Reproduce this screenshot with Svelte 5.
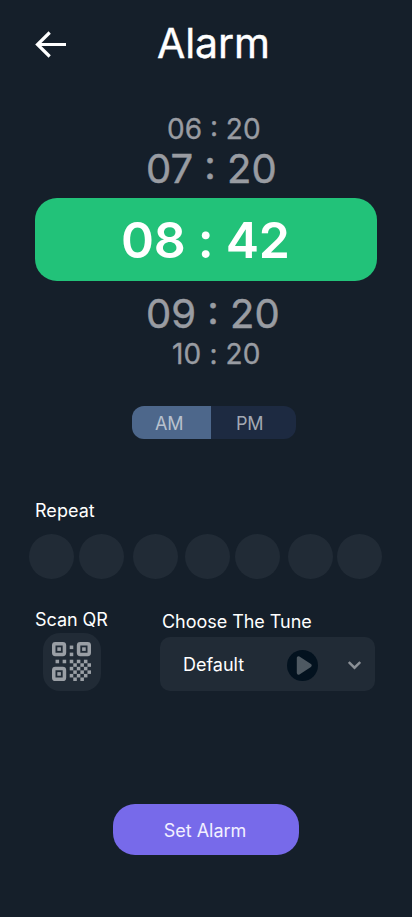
<script>
  const days = [29, 79, 133, 185, 235, 288, 337];
  const gaps = days.map((x, i) => (i ? x - days[i - 1] - 45 : 0));
  const u = 39 / 11;
  const finders = [[0, 0], [7, 0], [0, 7]];
  const cells = [[5, 1], [5, 3], [1, 5], [3, 5]];
  for (let r = 5; r < 11; r++) {
    for (let c = 5; c < 11; c++) {
      if ((r + c) % 2 === 0 && !(r === 10 && c === 10)) cells.push([c, r]);
    }
  }
</script>

<main>
  <header>
    <svg class="back" width="32" height="28" viewBox="0 0 32 28" fill="none" stroke="#fff" stroke-width="3.2">
      <path d="M31 14.500H3M14.700 2.500 2.500 14.500 14.700 26.500" />
    </svg>
    <h1>Alarm</h1>
  </header>

  <section class="times">
    <div class="far first">06 : 20</div>
    <div class="near before">07 : 20</div>
    <div class="current"><span>08 : 42</span></div>
    <div class="near after">09 : 20</div>
    <div class="far last">10 : 20</div>
  </section>

  <div class="period">
    <div class="am">AM</div>
    <div class="pm">PM</div>
  </div>

  <div class="label repeat">Repeat</div>
  <div class="days">
    {#each gaps as gap}
      <i style="margin-left:{gap}px"></i>
    {/each}
  </div>

  <div class="options">
    <div class="scan">
      <div class="label">Scan QR</div>
      <div class="qr">
        <svg width="39" height="39" viewBox="0 0 39 39">
          {#each finders as [c, r]}
            <rect x={c * u + 1.75} y={r * u + 1.75} width={4 * u - 3.5} height={4 * u - 3.5} rx="1.6" fill="none" stroke="#9a9fa5" stroke-width="3.5" />
            <rect x={c * u + 5.3} y={r * u + 5.3} width="3.6" height="3.6" fill="#9a9fa5" />
          {/each}
          {#each cells as [c, r]}
            <rect x={c * u} y={r * u} width={u} height={u} fill="#9a9fa5" />
          {/each}
        </svg>
      </div>
    </div>
    <div class="tune">
      <div class="label">Choose The Tune</div>
      <div class="select">
        <span>Default</span>
        <svg class="play" width="31" height="31" viewBox="0 0 31 31">
          <circle cx="15.5" cy="15.5" r="15.5" fill="#03121f" />
          <path d="M11.500 8v15l11.500-7.500z" fill="#4e5962" stroke="#4e5962" stroke-width="3.400" stroke-linejoin="round" />
        </svg>
        <svg class="chev" width="13" height="9" viewBox="0 0 13 9" fill="none" stroke="#8b9096" stroke-width="2.400">
          <path d="M.8 1 6.500 6.700l5.700-5.700" />
        </svg>
      </div>
    </div>
  </div>

  <button>Set Alarm</button>
</main>

<style>
  :global(body) { background: #151f2a; }
  main {
    box-sizing: border-box;
    width: 412px;
    height: 917px;
    overflow: hidden;
    display: flex;
    flex-direction: column;
    background: #151f2a;
    color: #fff;
    font-family: Inter, sans-serif;
    font-size: 18px;
    white-space: nowrap;
  }
  header { display: flex; height: 88px; padding-left: 35px; align-items: center; }
  .back { flex: none; }
  h1 { margin: -2px 0 0 90px; font-size: 41px; line-height: 50px; font-weight: 400; letter-spacing: -.1px; -webkit-text-stroke: .4px; }
  .times { display: flex; flex-direction: column; align-items: flex-start; margin-top: 24px; color: #999ca2; }
  .far { font-size: 28px; line-height: 34px; font-weight: 400; -webkit-text-stroke: .35px; }
  .near { font-size: 40px; line-height: 48px; font-weight: 400; -webkit-text-stroke: .5px; }
  .first { margin-left: 167px; }
  .before { margin-left: 146px; margin-top: -1px; }
  .after { margin-left: 146px; margin-top: 9px; }
  .last { margin-left: 172px; margin-top: -1px; letter-spacing: .15px; }
  .current {
    box-sizing: border-box;
    width: 342px;
    height: 83px;
    margin: 5px 0 0 35px;
    padding-left: 86px;
    border-radius: 22px;
    background: #22c279;
    color: #fff;
    font-size: 50px;
    line-height: 84px;
    font-weight: 600;
    letter-spacing: -.3px;
  }
  .period { display: flex; flex: none; width: 164px; height: 33px; margin: 35px 0 0 132px; border-radius: 12px; overflow: hidden; line-height: 35px; font-weight: 400; letter-spacing: -.2px; color: #b8c1ce; }
  .am { box-sizing: border-box; width: 79px; padding-left: 23px; background: #4d678b; }
  .pm { box-sizing: border-box; flex: 1; padding-left: 25px; background: #1d2a41; color: #a2a8b3; }
  .label { line-height: 22px; font-weight: 400; letter-spacing: -.04px; }
  .repeat { margin: 61px 0 0 35px; letter-spacing: .05px; }
  .days { display: flex; padding-left: 29px; margin-top: 12px; }
  .days i { flex: none; width: 45px; height: 45px; border-radius: 50%; background: #212b36; }
  .options { display: flex; align-items: flex-start; margin-top: 30px; padding-left: 35px; }
  .scan { width: 125px; }
  .qr { display: flex; box-sizing: border-box; width: 58px; height: 58px; margin: 2px 0 0 8px; padding: 9px; border-radius: 17px; background: #212b36; }
  .tune { padding-top: 2px; }
  .tune .label { padding-left: 2px; }
  .select { display: flex; box-sizing: border-box; align-items: center; width: 215px; height: 54px; margin-top: 4px; padding-left: 23px; border-radius: 10px; background: #212b36; }
  .select span { width: 104px; }
  .play { flex: none; margin-top: 2px; }
  .chev { flex: none; margin-left: 30px; margin-top: 2px; }
  button { width: 186px; height: 51px; margin: 113px 0 0 113px; padding: 2px 2px 0 0; border: 0; border-radius: 22px; background: #776aea; color: #f2f0ff; font: 400 18px/22px Inter, sans-serif; }
</style>
